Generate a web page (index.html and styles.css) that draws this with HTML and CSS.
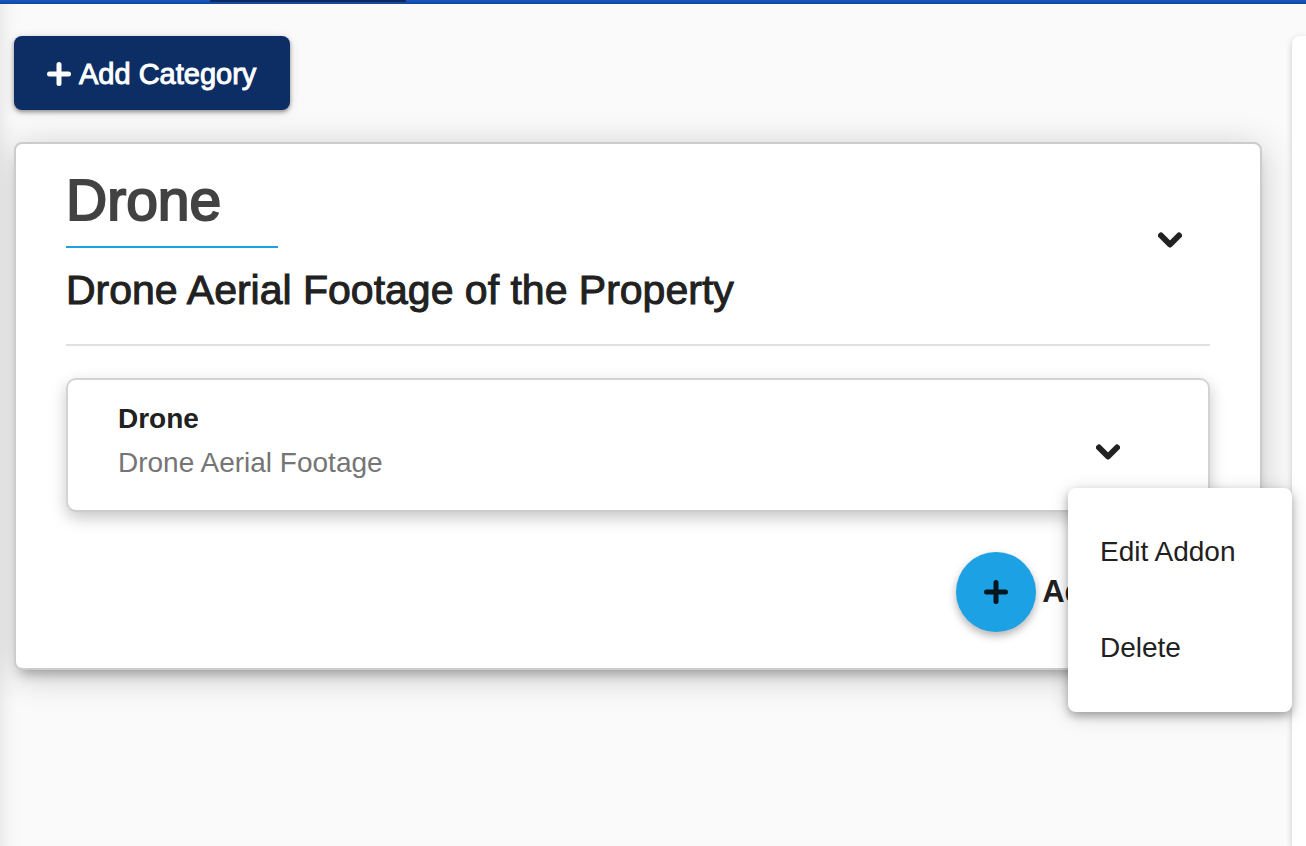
FILE: index.html
```html
<!DOCTYPE html>
<html lang="en">
<head>
<meta charset="utf-8">
<meta name="viewport" content="width=device-width, initial-scale=1">
<title>Add-on categories</title>
<link rel="stylesheet" href="styles.css">
</head>
<body>
<header class="topbar"><div class="topbar-tab"></div></header>
<div class="layout">
  <main class="content">
    <button class="add-category" type="button">
      <svg class="icon" viewBox="0 0 24 24" aria-hidden="true"><path d="M12 2.5v19M2.5 12h19"/></svg>
      <span>Add Category</span>
    </button>
    <section class="category">
      <header class="category-header">
        <div class="category-text">
          <h1 class="category-title">Drone</h1>
          <h2 class="category-description">Drone Aerial Footage of the Property</h2>
        </div>
        <button class="toggle" type="button" aria-label="Category options">
          <svg class="icon icon-chevron" viewBox="0 0 24 24" aria-hidden="true"><path d="M3 7.500l9 9 9-9"/></svg>
        </button>
      </header>
      <article class="addon">
        <div class="addon-text">
          <h3 class="addon-title">Drone</h3>
          <p class="addon-description">Drone Aerial Footage</p>
        </div>
        <div class="addon-actions">
          <button class="toggle" type="button" aria-label="Addon options" aria-expanded="true">
            <svg class="icon icon-chevron" viewBox="0 0 24 24" aria-hidden="true"><path d="M3 7.500l9 9 9-9"/></svg>
          </button>
          <div class="menu" role="menu">
            <button class="menu-item" type="button" role="menuitem">Edit Addon</button>
            <button class="menu-item" type="button" role="menuitem">Delete</button>
          </div>
        </div>
      </article>
      <div class="category-footer">
        <button class="fab" type="button" aria-labelledby="add-addon">
          <svg class="icon" viewBox="0 0 24 24" aria-hidden="true"><path d="M12 2.500v19M2.500 12h19"/></svg>
        </button>
        <span class="fab-label" id="add-addon">Add Addon</span>
      </div>
    </section>
  </main>
  <aside class="side-panel"></aside>
</div>
</body>
</html>
```
FILE: styles.css
```css
* {
  box-sizing: border-box;
}

body {
  margin: 0;
  min-height: 100vh;
  display: flex;
  flex-direction: column;
  background: #fafafa;
  color: #212121;
  font-family: "Liberation Sans", Arial, sans-serif;
  font-size: 28px;
  overflow: hidden;
}

button {
  border: 0;
  background: none;
  color: inherit;
  font: inherit;
  cursor: pointer;
}

h1, h2, h3, p {
  margin: 0;
}

.icon {
  width: 24px;
  height: 24px;
  fill: none;
  stroke: currentColor;
  stroke-width: 5;
  stroke-linecap: round;
  stroke-linejoin: round;
}

.icon-chevron {
  stroke-width: 6;
}

.topbar {
  height: 4px;
  padding-left: 210px;
  background: linear-gradient(#1853b9 50%, #1449a4 50%);
}

.topbar-tab {
  width: 196px;
  height: 2px;
  background: #0b2a5e;
}

.layout {
  flex: 1;
  display: grid;
  grid-template-columns: 1fr 14px;
  gap: 30px;
  padding: 32px 0 0 14px;
  box-shadow: inset 20px 0 20px -20px rgba(0, 0, 0, 0.12);
}

.content {
  display: flex;
  flex-direction: column;
  align-items: stretch;
  gap: 32px;
}

.add-category {
  align-self: flex-start;
  display: flex;
  align-items: center;
  gap: 8px;
  padding: 21px 34px 19px 33px;
  border-radius: 8px;
  background: #0c2e64;
  color: #fff;
  font-size: 29px;
  line-height: 34px;
  -webkit-text-stroke: 1px currentColor;
  box-shadow: 0 2px 4px rgba(0, 0, 0, 0.4), 0 2px 12px rgba(0, 0, 0, 0.1);
}

.category {
  padding: 0 50px 36px;
  border: 2px solid #ccc;
  border-radius: 8px;
  background: #fff;
  box-shadow: 0 10px 12px -6px rgba(0, 0, 0, 0.28), 0 6px 36px rgba(0, 0, 0, 0.2);
}

.category-header {
  display: flex;
  align-items: center;
  justify-content: space-between;
  padding: 22px 0 31px;
  border-bottom: 2px solid #e0e0e0;
}

.category-title {
  width: 212px;
  padding-bottom: 12px;
  border-bottom: 2px solid #1ca1e4;
  color: #424242;
  font-size: 57px;
  font-weight: 400;
  line-height: 68px;
  -webkit-text-stroke: 2px currentColor;
}

.category-description {
  padding-top: 19px;
  font-size: 41px;
  font-weight: 400;
  line-height: 46px;
  -webkit-text-stroke: 1px currentColor;
}

.toggle {
  display: flex;
  align-items: center;
  justify-content: center;
  width: 80px;
  height: 72px;
  padding: 0;
}

.addon {
  display: flex;
  align-items: flex-end;
  justify-content: space-between;
  margin-top: 32px;
  padding: 17px 60px 22px 50px;
  border: 2px solid #d3d3d3;
  border-bottom-color: #ccc;
  border-radius: 10px;
  background: #fff;
  box-shadow: 0 6px 16px rgba(0, 0, 0, 0.22);
}

.addon-text {
  padding-bottom: 3px;
}

.addon-title {
  font-size: 28px;
  line-height: 44px;
}

.addon-description {
  color: #757575;
  line-height: 44px;
}

.addon-actions {
  position: relative;
}

.menu {
  position: absolute;
  top: 100%;
  left: 0;
  z-index: 1;
  width: 224px;
  padding: 16px 0;
  border-radius: 8px;
  background: #fff;
  box-shadow: 0 4px 8px rgba(0, 0, 0, 0.28), 0 4px 20px rgba(0, 0, 0, 0.16);
}

.menu-item {
  display: block;
  width: 100%;
  padding: 0 32px;
  line-height: 96px;
  text-align: left;
  white-space: nowrap;
}

.category-footer {
  display: flex;
  align-items: center;
  justify-content: flex-end;
  gap: 6px;
  margin-top: 40px;
  padding-right: 2px;
}

.fab {
  display: grid;
  place-items: center;
  width: 80px;
  height: 80px;
  border-radius: 50%;
  background: #1ca1e4;
  color: #06151e;
  box-shadow: 0 4px 8px rgba(0, 0, 0, 0.3);
}

.fab-label {
  font-size: 31px;
  font-weight: 700;
}

.side-panel {
  border-radius: 8px 0 0 0;
  background: #fff;
  box-shadow: 0 2px 6px rgba(0, 0, 0, 0.2);
}
```
